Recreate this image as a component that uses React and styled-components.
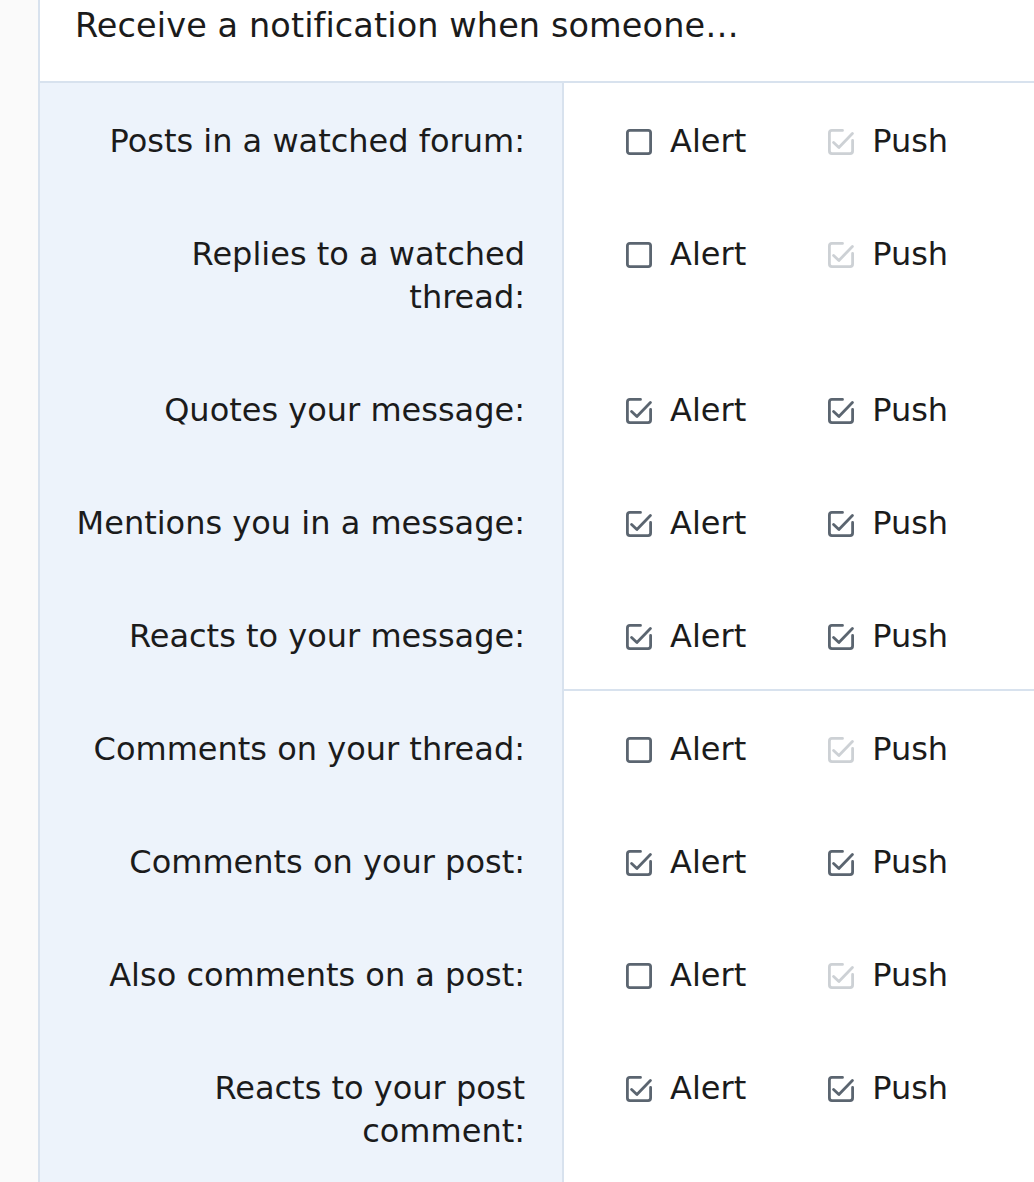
import React from "react";
import styled, { createGlobalStyle } from "styled-components";

const Global = createGlobalStyle`
  html, body {
    margin: 0;
    padding: 0;
    overflow: hidden;
    background: #fafafa;
  }
  body {
    font-family: "DejaVu Sans", Verdana, sans-serif;
    font-size: 32px;
    color: #1b1b1b;
  }
`;

const Page = styled.div`
  padding-left: 38px;
  width: 1240px;
`;

const Block = styled.section`
  background: #fff;
  border-left: 2px solid #d8e2ee;
  border-right: 2px solid #d8e2ee;
`;

const Header = styled.h3`
  margin: 0;
  padding: 4px 35px 34px;
  font-size: 33.5px;
  font-weight: normal;
  line-height: 43px;
  letter-spacing: 0.1px;
  border-bottom: 2px solid #d8e2ee;
`;

const Rows = styled.div`
  display: grid;
  grid-template-columns: 524px 1fr;
`;

const Label = styled.div`
  background: #edf3fb;
  border-right: 2px solid #d8e2ee;
  padding: 37px 37px 33px 30px;
  text-align: right;
  line-height: 43px;
`;

const Choices = styled.div`
  display: flex;
  align-items: flex-start;
  gap: 82px;
  padding: 37px 0 ${(p) => (p.$ruled ? "31px" : "33px")} 62px;
  border-bottom: ${(p) => (p.$ruled ? "2px solid #d8e2ee" : "none")};
  line-height: 43px;
`;

const Choice = styled.label`
  display: flex;
  align-items: center;
  gap: 18px;
  height: 43px;
`;

const Box = styled.svg`
  width: 26px;
  height: 26px;
  flex: none;
  color: ${(p) => (p.$disabled ? "#cdd1d5" : "#5b6570")};
`;

function CheckIcon({ checked, disabled }) {
  return (
    <Box viewBox="0 0 26 26" $disabled={disabled} fill="none" stroke="currentColor" strokeWidth="2.8" strokeLinecap="round" strokeLinejoin="round">
      {checked ? (
        <>
          <path d="M14.5 1.4H3.9Q1.4 1.4 1.4 3.9V22.1Q1.4 24.6 3.9 24.6H22.1Q24.6 24.6 24.6 22.1V11.5" />
          <path d="M5.6 13.4L10.9 18.4L24.4 4.6" />
        </>
      ) : (
        <rect x="1.4" y="1.4" width="23.2" height="23.2" rx="2.4" />
      )}
    </Box>
  );
}

const rows = [
  { label: "Posts in a watched forum:", on: false },
  { label: "Replies to a watched thread:", on: false },
  { label: "Quotes your message:", on: true },
  { label: "Mentions you in a message:", on: true },
  { label: "Reacts to your message:", on: true, ruled: true },
  { label: "Comments on your thread:", on: false },
  { label: "Comments on your post:", on: true },
  { label: "Also comments on a post:", on: false },
  { label: "Reacts to your post comment:", on: true },
];

export default function App() {
  return (
    <>
      <Global />
      <Page>
        <Block>
          <Header>Receive a notification when someone…</Header>
          <Rows>
            {rows.map((r) => (
              <React.Fragment key={r.label}>
                <Label>{r.label}</Label>
                <Choices $ruled={r.ruled}>
                  <Choice>
                    <CheckIcon checked={r.on} />
                    Alert
                  </Choice>
                  <Choice>
                    <CheckIcon checked disabled={!r.on} />
                    Push
                  </Choice>
                </Choices>
              </React.Fragment>
            ))}
          </Rows>
        </Block>
      </Page>
    </>
  );
}
